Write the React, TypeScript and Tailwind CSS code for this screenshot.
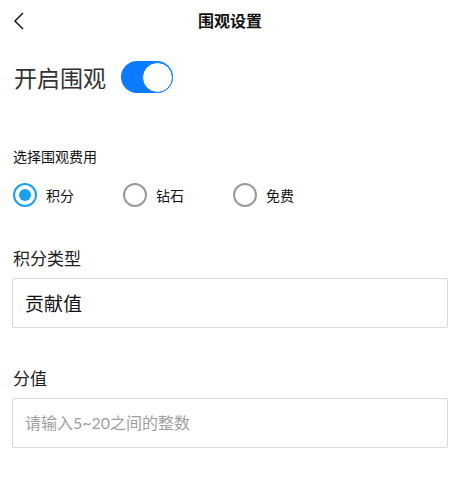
import React from "react";

const font = { fontFamily: '"Noto Sans CJK SC", "Noto Sans", sans-serif' };

function Radio({ label, checked }: { label: string; checked?: boolean }) {
  return (
    <div className="flex items-center w-[110px]">
      {checked ? (
        <div className="w-[24px] h-[24px] rounded-full border-[2px] border-[#1a9ff0] flex items-center justify-center">
          <div className="w-[12px] h-[12px] rounded-full bg-[#1a9ff0]" />
        </div>
      ) : (
        <div className="w-[24px] h-[24px] rounded-full border-[2px] border-[#9a9a9a]" />
      )}
      <span className="ml-[9px] text-[14px] text-[#111] leading-[20px]">{label}</span>
    </div>
  );
}

export default function App() {
  return (
    <div className="w-[460px] h-[498px] bg-white" style={font}>
      <div className="relative h-[40px] flex items-center justify-center">
        <svg className="absolute left-[12px] top-[11px]" width="14" height="20" viewBox="0 0 14 20">
          <path d="M11 2 L3 10 L11 18" fill="none" stroke="#222" strokeWidth="1.6" />
        </svg>
        <span className="text-[16px] font-bold text-[#111] leading-[20px]">围观设置</span>
      </div>

      <div className="flex items-center h-[42px] mt-[16px] pl-[14px]">
        <span className="text-[23px] text-[#333] leading-[30px]">开启围观</span>
        <div className="ml-[15px] w-[52px] h-[32px] rounded-full bg-[#0a7bff] flex items-center justify-end">
          <div className="w-[31px] h-[31px] rounded-full bg-white border border-[#0a7bff]" />
        </div>
      </div>

      <div className="mt-[48px] pl-[13px] text-[14px] text-[#111] leading-[20px]">选择围观费用</div>

      <div className="flex items-center h-[26px] mt-[16px] pl-[13px]">
        <Radio label="积分" checked />
        <Radio label="钻石" />
        <Radio label="免费" />
      </div>

      <div className="mt-[38px] pl-[13px] text-[17px] text-[#222] leading-[24px]">积分类型</div>
      <div className="mt-[8px] mx-[12px] h-[50px] border border-[#d9d9d9] rounded-[2px] flex items-center pl-[12px]">
        <span className="text-[19px] text-[#111]">贡献值</span>
      </div>

      <div className="mt-[38px] pl-[13px] text-[17px] text-[#222] leading-[24px]">分值</div>
      <div className="mt-[8px] mx-[12px] h-[50px] border border-[#d9d9d9] rounded-[2px] flex items-center pl-[12px]">
        <span
          className="text-[16px] text-[#9e9e9e] font-['Lato','Noto_Sans_CJK_SC',sans-serif]"
        >
          请输入5~20之间的整数
        </span>
      </div>
    </div>
  );
}
